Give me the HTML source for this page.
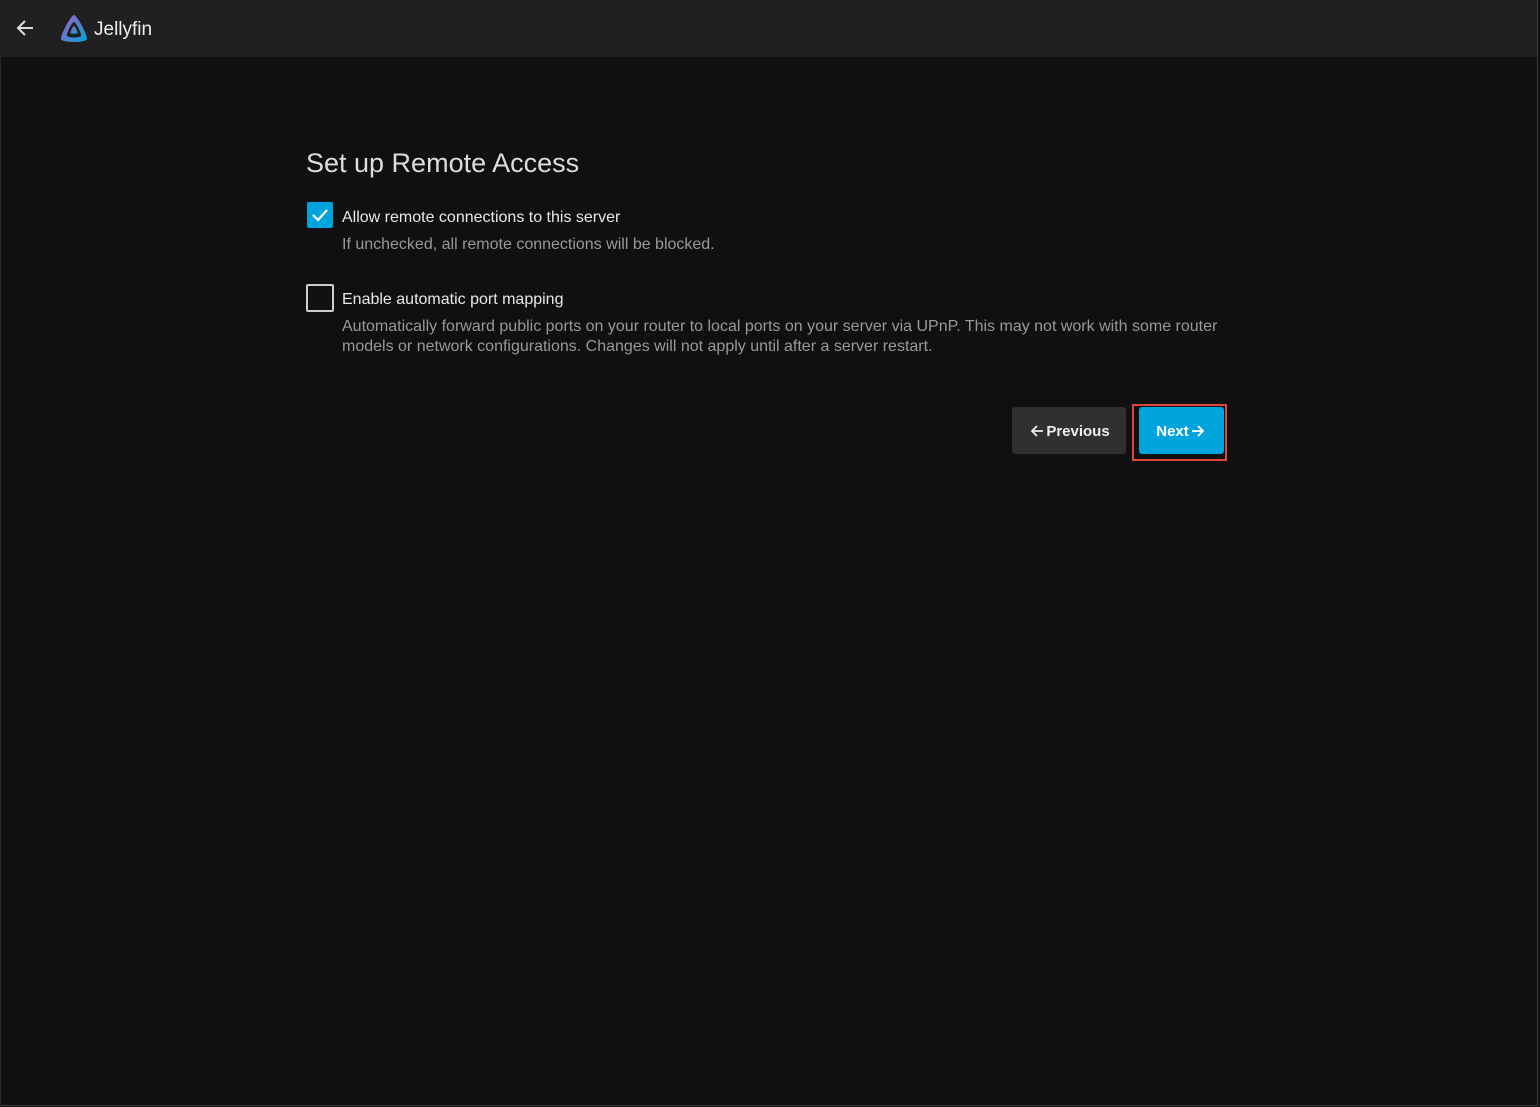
<!DOCTYPE html>
<html><head><style>
body{margin:0;width:1540px;height:1107px;background:#101010;font-family:"Liberation Sans","DejaVu Sans",sans-serif;color:#ddd;position:relative;overflow:hidden}
.frame{position:absolute;left:0;top:0;width:1536px;height:1105px;border:1px solid #3a3a3a;border-top:none;border-left-color:#2a2a2a}
.hdr{position:absolute;left:0;top:0;width:1537px;height:57px;background:#202020}
.t{position:absolute;white-space:nowrap}
.cb{position:absolute;width:24px;height:24px;border-radius:2px}
.btn{position:absolute;top:407px;height:47px;border-radius:3px;font-weight:bold;font-size:15px;color:#eee;display:flex;align-items:center;justify-content:center}
.btn svg{margin:0 2px}
</style></head><body>
<div class="frame"></div>
<div class="hdr">
<svg style="position:absolute;left:15px;top:18px" width="20" height="20" viewBox="0 0 20 20"><path d="M18 10H3M10 3L3 10L10 17" stroke="#ddd" stroke-width="2" fill="none"/></svg>
<svg style="position:absolute;left:58px;top:13px" width="32" height="32" viewBox="0 0 32 32"><defs><linearGradient id="g" x1="0" y1="0" x2="1" y2="1"><stop offset="0" stop-color="#aa5cc3"/><stop offset="1" stop-color="#00a4dc"/></linearGradient></defs><path d="M16 2C13 2 2 23 3 26C4 30 28 30 29 26C30 23 19 2 16 2ZM16 9C18 9 24 21 23 23C22 25 10 25 9 23C8 21 14 9 16 9Z" fill="url(#g)" fill-rule="evenodd"/><path d="M16 13C15 13 12 19 12.5 20C13 21 19 21 19.5 20C20 19 17 13 16 13Z" fill="url(#g)"/></svg>
<div class="t" style="left:94px;top:19px;font-size:19px;color:#eee">Jellyfin</div>
</div>
<div class="t" style="left:306px;top:148px;font-size:27px;color:#ddd">Set up Remote Access</div>
<div class="cb" style="left:307px;top:202px;background:#00a4dc;width:26px;height:26px"><svg width="26" height="26" viewBox="0 0 26 26"><path d="M6 13L11 18L20 8" stroke="#fff" stroke-width="2.2" fill="none"/></svg></div>
<div class="t" style="left:342px;top:209px;font-size:16px;color:#e8e8e8">Allow remote connections to this server</div>
<div class="t" style="left:342px;top:236px;font-size:16px;color:#999">If unchecked, all remote connections will be blocked.</div>
<div class="cb" style="left:306px;top:284px;border:2px solid #ccc"></div>
<div class="t" style="left:342px;top:291px;font-size:16px;color:#e8e8e8">Enable automatic port mapping</div>
<div class="t" style="left:342px;top:317px;font-size:16px;color:#999;line-height:20px">Automatically forward public ports on your router to local ports on your server via UPnP. This may not work with some router<br>models or network configurations. Changes will not apply until after a server restart.</div>
<div class="btn" style="left:1012px;width:114px;background:#303030;padding-top:1px;box-sizing:border-box"><svg width="14" height="14" viewBox="0 0 14 14"><path d="M13 7H2M7 2L2 7L7 12" stroke="#eee" stroke-width="1.8" fill="none"/></svg>Previous</div>
<div style="position:absolute;left:1132px;top:404px;width:91px;height:53px;border:2px solid #e0453a"></div>
<div class="btn" style="left:1139px;width:85px;background:#00a4dc;color:#fff;padding-top:1px;box-sizing:border-box">Next<svg width="14" height="14" viewBox="0 0 14 14"><path d="M1 7H12M7 2L12 7L7 12" stroke="#fff" stroke-width="1.8" fill="none"/></svg></div>
</body></html>
